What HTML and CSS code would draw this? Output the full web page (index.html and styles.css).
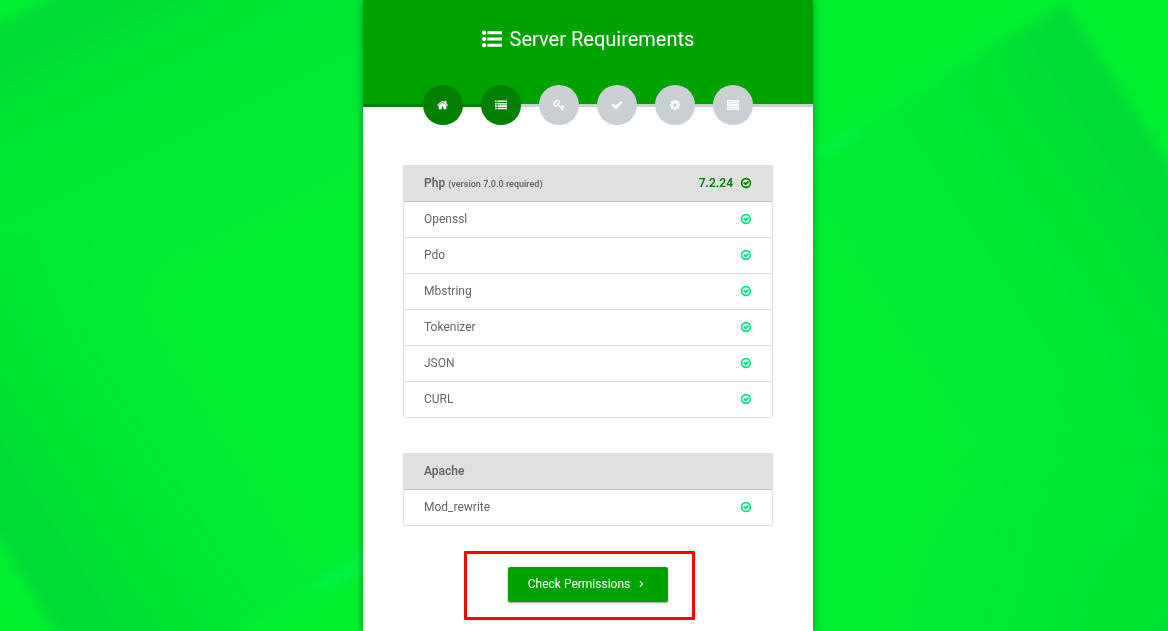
FILE: index.html
```html
<!DOCTYPE html>
<html lang="en">
<head>
<meta charset="utf-8">
<meta name="viewport" content="width=device-width, initial-scale=1">
<title>Server Requirements</title>
<link rel="stylesheet" href="styles.css">
</head>
<body>
<svg class="backdrop" viewBox="0 0 1168 631" preserveAspectRatio="xMidYMid slice" aria-hidden="true">
  <defs>
    <filter id="soft" x="-10%" y="-10%" width="120%" height="120%" color-interpolation-filters="sRGB"><feGaussianBlur stdDeviation="6"/></filter>
    <filter id="glint" x="-10%" y="-50%" width="120%" height="200%" color-interpolation-filters="sRGB"><feGaussianBlur stdDeviation="4"/></filter>
    <linearGradient id="leftTop" gradientUnits="userSpaceOnUse" x1="20" y1="12" x2="168" y2="306">
      <stop offset="0" stop-color="#00da36"/><stop offset=".16" stop-color="#00dd35"/><stop offset=".3" stop-color="#00e534"/><stop offset=".6" stop-color="#00e933"/><stop offset="1" stop-color="#00ee31"/>
    </linearGradient>
    <linearGradient id="leftLow" gradientUnits="userSpaceOnUse" x1="28" y1="586" x2="300" y2="416">
      <stop offset="0" stop-color="#00da35"/><stop offset=".16" stop-color="#00dc35"/><stop offset=".36" stop-color="#00e433" stop-opacity=".95"/><stop offset=".65" stop-color="#00e933" stop-opacity=".6"/><stop offset="1" stop-color="#00ee31" stop-opacity="0"/>
    </linearGradient>
    <linearGradient id="rightSide" gradientUnits="userSpaceOnUse" x1="1117" y1="83" x2="815" y2="277">
      <stop offset="0" stop-color="#00da36"/><stop offset=".17" stop-color="#00dd35"/><stop offset=".34" stop-color="#00e534"/><stop offset=".65" stop-color="#00ea33"/><stop offset="1" stop-color="#00ee31"/>
    </linearGradient>
    <radialGradient id="corner" gradientUnits="userSpaceOnUse" cx="1190" cy="660" r="330">
      <stop offset="0" stop-color="#00d936"/><stop offset=".2" stop-color="#00e434"/><stop offset="1" stop-color="#00e434" stop-opacity="0"/>
    </radialGradient>
  </defs>
  <rect width="1168" height="631" fill="#00f030"/>
  <g filter="url(#soft)">
    <path d="M-40 47L45 0 110-40H588V450L363 568 250 625 180 700H98L55 631 0 542-40 478Z" fill="url(#leftTop)"/>
    <path d="M-40 250L588 100V450L363 568 250 625 180 700H98L55 631 0 542-40 478Z" fill="url(#leftLow)"/>
    <path d="M1065 3L1208 224V700H588V260L862 127Z" fill="url(#rightSide)"/>
  </g>
  <g filter="url(#glint)">
    <path d="M312 584L380 544V566L318 592Z" fill="#00f245"/>
    <path d="M795 160L862 124 856 138 795 172Z" fill="#00f245"/>
  </g>
  <rect width="1168" height="631" fill="url(#corner)"/>
</svg>

<svg class="sprite" aria-hidden="true">
  <symbol id="i-home" viewBox="0 0 1792 1792"><path d="M1408 992v480q0 26-19 45t-45 19h-384v-384h-256v384h-384q-26 0-45-19t-19-45v-480q0-1 .5-3t.5-3l575-474 575 474q1 2 1 6zm223-69l-62 74q-8 9-21 11h-3q-13 0-21-7l-692-577-692 577q-12 8-24 7-13-2-21-11l-62-74q-8-10-7-23.500t11-21.500l719-599q32-26 76-26t76 26l244 204v-195q0-14 9-23t23-9h192q14 0 23 9t9 23v408l219 182q10 8 11 21.500t-7 23.500z"/></symbol>
  <symbol id="i-list" viewBox="0 0 1792 1792"><path d="M0 1300h256v236H0zM0 940h256v236H0zM0 580h256v236H0zM0 220h256v236H0zM384 1300h1408v236H384zM384 940h1408v236H384zM384 580h1408v236H384zM384 220h1408v236H384z"/></symbol>
  <symbol id="i-list-ul" viewBox="0 0 1792 1792"><path d="M0 336a192 192 0 1 0 384 0a192 192 0 1 0-384 0M0 896a192 192 0 1 0 384 0a192 192 0 1 0-384 0M0 1456a192 192 0 1 0 384 0a192 192 0 1 0-384 0M480 200h1312v272H480zM480 760h1312v272H480zM480 1320h1312v272H480z"/></symbol>
  <symbol id="i-key" viewBox="0 0 1792 1792"><path d="M832 512q0-80-56-136t-136-56-136 56-56 136q0 42 19 83-41-19-83-19-80 0-136 56t-56 136 56 136 136 56 136-56 56-136q0-42-19-83 41 19 83 19 80 0 136-56t56-136zm851 704q0 17-49 66t-66 49q-9 0-28.500-16t-36.500-33-38.500-40-24.500-26l-96 96 220 220q28 28 28 68 0 42-39 81t-81 39q-40 0-68-28l-671-671q-176 131-365 131-163 0-265.500-102.500t-102.500-265.500q0-160 95-313t248-248 313-95q163 0 265.500 102.500t102.500 265.500q0 189-131 365l355 355 96-96q-3-3-26-24.500t-40-38.500-33-36.500-16-28.500q0-17 49-66t66-49q13 0 23 10 6 6 46 44.500t82 79.500 86.500 86 73 78 28.500 41z"/></symbol>
  <symbol id="i-check" viewBox="0 0 1792 1792"><path d="M1671 566q0 40-28 68l-724 724-136 136q-28 28-68 28t-68-28l-136-136-362-362q-28-28-28-68t28-68l136-136q28-28 68-28t68 28l294 295 656-657q28-28 68-28t68 28l136 136q28 28 28 68z"/></symbol>
  <symbol id="i-cog" viewBox="0 0 1792 1792"><path d="M1152 896q0-106-75-181t-181-75-181 75-75 181 75 181 181 75 181-75 75-181zm512-109v222q0 12-8 23t-20 13l-185 28q-19 54-39 91 35 50 107 138 10 12 10 25t-9 23q-27 37-99 108t-94 71q-12 0-26-9l-138-108q-44 23-91 38-16 136-29 186-7 28-36 28h-222q-14 0-24.500-8.500t-11.500-21.500l-28-184q-49-16-90-37l-141 107q-10 9-25 9-14 0-25-11-126-114-165-168-7-10-7-23 0-12 8-23 15-21 51-66.500t54-70.500q-27-50-41-99l-183-27q-13-2-21-12.500t-8-23.500v-222q0-12 8-23t19-13l186-28q14-46 39-92-40-57-107-138-10-12-10-24 0-10 9-23 26-36 98.500-107.500t94.500-71.500q13 0 26 10l138 107q44-23 91-38 16-136 29-186 7-28 36-28h222q14 0 24.500 8.500t11.500 21.500l28 184q49 16 90 37l142-107q9-9 24-9 13 0 25 10 129 119 165 170 7 8 7 22 0 12-8 23-15 21-51 66.500t-54 70.500q26 50 41 98l183 28q13 2 21 12.500t8 23.500z"/></symbol>
  <symbol id="i-server" viewBox="0 0 1792 1792"><path fill-rule="evenodd" d="M0 160h1792v430H0zM128 320v110h1000v-110zM1440 290v160h160V290zM0 680h1792v430H0zM128 840v110h640v-110zM1440 810v160h160V810zM0 1200h1792v430H0zM128 1360v110h1000v-110zM1440 1330v160h160v-160z"/></symbol>
  <symbol id="i-ok" viewBox="0 0 1792 1792"><circle cx="896" cy="896" r="656" fill="none" stroke="currentColor" stroke-width="240"/><path d="M1299 813l-422 422q-19 19-45 19t-45-19l-294-294q-19-19-19-45t19-45l102-102q19-19 45-19t45 19l147 147 275-275q19-19 45-19t45 19l102 102q19 19 19 45t-19 45z"/></symbol>
  <symbol id="i-angle" viewBox="0 0 1792 1792"><path d="M560 460l436 436-436 436" fill="none" stroke="currentColor" stroke-width="150"/></symbol>
</svg>

<main class="card">
  <header class="card-header">
    <h1 class="title"><svg class="icon title-icon" aria-hidden="true"><use href="#i-list-ul"/></svg>Server Requirements</h1>
  </header>

  <nav aria-label="Installation steps">
    <ol class="steps">
      <li><a class="step done" href="#" aria-label="Welcome"><svg class="icon"><use href="#i-home"/></svg></a></li>
      <li><a class="step done" href="#" aria-label="Server requirements" aria-current="step"><svg class="icon"><use href="#i-list"/></svg></a></li>
      <li><span class="step"><svg class="icon"><use href="#i-key"/></svg></span></li>
      <li><span class="step"><svg class="icon"><use href="#i-check"/></svg></span></li>
      <li><span class="step"><svg class="icon"><use href="#i-cog"/></svg></span></li>
      <li><span class="step"><svg class="icon"><use href="#i-server"/></svg></span></li>
    </ol>
  </nav>

  <div class="content">
    <ul class="list">
      <li class="row head"><span>Php <small class="note">(version 7.0.0 required)</small></span><span class="version">7.2.24<svg class="icon"><use href="#i-ok"/></svg></span></li>
      <li class="row">Openssl<svg class="icon ok"><use href="#i-ok"/></svg></li>
      <li class="row">Pdo<svg class="icon ok"><use href="#i-ok"/></svg></li>
      <li class="row">Mbstring<svg class="icon ok"><use href="#i-ok"/></svg></li>
      <li class="row">Tokenizer<svg class="icon ok"><use href="#i-ok"/></svg></li>
      <li class="row">JSON<svg class="icon ok"><use href="#i-ok"/></svg></li>
      <li class="row">CURL<svg class="icon ok"><use href="#i-ok"/></svg></li>
    </ul>
    <ul class="list">
      <li class="row head">Apache</li>
      <li class="row">Mod_rewrite<svg class="icon ok"><use href="#i-ok"/></svg></li>
    </ul>
    <div class="actions">
      <div class="highlight">
        <a class="button" href="#">Check Permissions<svg class="icon" aria-hidden="true"><use href="#i-angle"/></svg></a>
      </div>
    </div>
  </div>
</main>
</body>
</html>
```

FILE: styles.css
```css
* { box-sizing: border-box; }

body {
  margin: 0;
  padding-left: 8px;
  background: #00ec32;
  color: #666;
  font: 12px/18px Roboto, "Liberation Sans", sans-serif;
}

ul, ol {
  margin: 0;
  padding: 0;
  list-style: none;
}

.backdrop {
  position: fixed;
  inset: 0;
  z-index: -1;
  width: 100%;
  height: 100%;
}

.sprite { position: absolute; width: 0; height: 0; }

.icon {
  flex: none;
  width: 12px;
  height: 12px;
  fill: currentColor;
}

.card {
  max-width: 450px;
  min-height: 100vh;
  margin: 0 auto;
  background: #fff;
  box-shadow: 0 0 8px rgba(0, 0, 0, .4);
}

.card-header {
  padding: 24px 20px 50px;
  background: #00a200;
  color: #fff;
}

.title {
  display: flex;
  align-items: center;
  justify-content: center;
  gap: 8px;
  margin: 0;
  font-size: 20px;
  font-weight: 400;
  line-height: 30px;
}

.title-icon { width: 20px; height: 20px; }

.steps {
  display: flex;
  justify-content: center;
  gap: 18px;
  margin-top: -19px;
  background: linear-gradient(to right, green calc(50% - 87px), #cacfd3 0) 0 19px / 100% 3px no-repeat;
}

.step {
  display: flex;
  align-items: center;
  justify-content: center;
  width: 40px;
  height: 40px;
  border-radius: 50%;
  background: #cacfd3;
  color: #fff;
}

.done { background: green; }

.content { padding: 40px 40px 28px; }

.list {
  margin-bottom: 35px;
  border: 1px solid #e0e0e0;
  border-bottom: 0;
  border-radius: 2px;
}

.row {
  display: flex;
  align-items: center;
  justify-content: space-between;
  padding: 8px 20px 9px;
  border-bottom: 1px solid #e0e0e0;
}

.row:last-child { border-radius: 0 0 2px 2px; }

.head {
  border-bottom-color: #c4c4c4;
  background: #e0e0e0;
  font-weight: 600;
}

.note {
  font-size: 9px;
  line-height: 12px;
}

.version {
  display: flex;
  align-items: center;
  gap: 7px;
  color: green;
}

.ok { color: #00e07a; }

.actions { text-align: center; }

.highlight {
  position: relative;
  display: inline-block;
  margin-top: 6px;
}

.highlight::after {
  content: "";
  position: absolute;
  inset: -16px -27px -18px -44px;
  border: 3px solid #f00;
  border-radius: 1px;
  pointer-events: none;
}

.button {
  display: flex;
  align-items: center;
  gap: 6px;
  padding: 8px 20px 9px;
  border-radius: 2px;
  background: #00a200;
  box-shadow: 0 1px 2px rgba(0, 0, 0, .4);
  color: #fff;
  text-decoration: none;
}
```
